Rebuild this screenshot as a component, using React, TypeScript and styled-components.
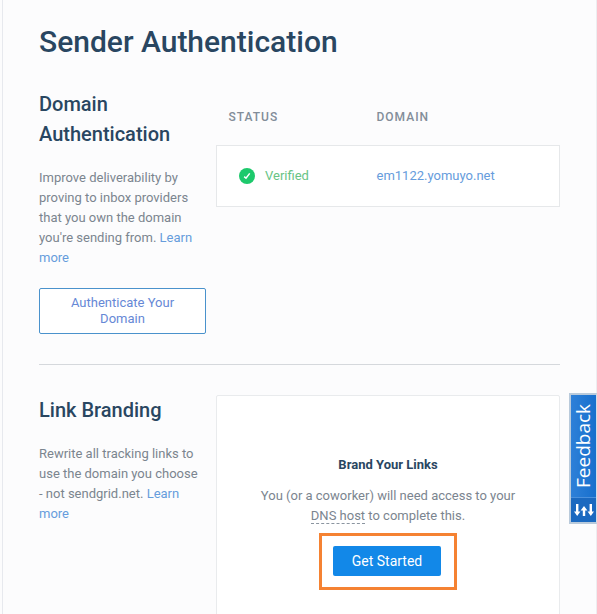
import React from "react";
import styled, { createGlobalStyle } from "styled-components";

const GlobalStyle = createGlobalStyle`
  *, *::before, *::after { box-sizing: border-box; }
  html { scrollbar-width: none; }
  body {
    margin: 0;
    background: #fcfcfd;
    color: #7b858f;
    font-family: Roboto, "Liberation Sans", sans-serif;
    font-size: 13px;
    line-height: 20px;
  }
  h1, h2, h3, p { margin: 0; }
`;

const Page = styled.main`
  min-height: 100vh;
  margin-left: 2px;
  padding: 22px 36px 32px;
  border-left: 1px solid #e7e9ee;
  border-right: 1px solid #ededf0;
`;

const Title = styled.h1`
  margin-bottom: 27px;
  color: #294661;
  font-size: 30px;
  font-weight: 500;
  line-height: 40px;
`;

const Section = styled.section`
  display: grid;
  grid-template-columns: 167px minmax(0, 1fr);
  column-gap: 10px;

  & + & {
    margin-top: 30px;
    padding-top: 30px;
    border-top: 1px solid #d5d8dc;
  }
`;

const SectionTitle = styled.h2`
  color: #294661;
  font-size: 20px;
  font-weight: 500;
  line-height: 30px;
`;

const Copy = styled.p`
  margin-top: 19px;
  padding-right: 4px;
`;

const Link = styled.a`
  color: #669cdc;
  text-decoration: none;
`;

const OutlineButton = styled.button`
  width: 100%;
  margin-top: 20px;
  padding: 6px 20px;
  border: 1px solid #4a92cc;
  border-radius: 2px;
  background: #fff;
  color: #6688d6;
  font: inherit;
  line-height: 16px;
`;

const DomainTable = styled.table`
  width: 100%;
  border-collapse: collapse;
  text-align: left;
`;

const HeadCell = styled.th`
  height: 56px;
  padding: 0 12px;
  color: #828d99;
  font-size: 12px;
  font-weight: 500;
  letter-spacing: 1px;
  text-transform: uppercase;

  &:first-child { width: 148px; }
`;

const BodyRow = styled.tr`
  height: 61px;
  border: 1px solid #e6e8ea;
  background: #fff;
`;

const BodyCell = styled.td`
  padding: 0 12px;

  &:first-child { padding-left: 22px; }
`;

const Status = styled.span`
  display: flex;
  align-items: center;
  gap: 10px;
  color: #68c485;
`;

const Card = styled.div`
  display: flex;
  flex-direction: column;
  align-items: center;
  padding: 59px 40px 48px;
  border: 1px solid #e9ebed;
  border-radius: 2px;
  background: #fff;
  text-align: center;
`;

const CardTitle = styled.h3`
  margin-bottom: 11px;
  color: #294661;
  font-size: 13px;
  font-weight: 700;
  line-height: 20px;
`;

const Term = styled.abbr`
  border-bottom: 1px dashed #8b95a0;
  text-decoration: none;
`;

const Highlight = styled.div`
  margin-top: 7px;
  padding: 10px 13px 11px 11px;
  border: 3px solid #f58232;
`;

const PrimaryButton = styled.button`
  display: block;
  height: 30px;
  padding: 0 19px;
  border: 0;
  border-radius: 2px;
  background: #1288e8;
  color: #fff;
  font: inherit;
  font-size: 14px;
`;

const FeedbackTab = styled.button`
  position: fixed;
  top: 393px;
  right: 0;
  display: flex;
  flex-direction: column;
  align-items: center;
  width: 28px;
  padding: 0;
  border: 2px solid #b9cadb;
  border-right: 1px solid #d5dde6;
  background: linear-gradient(90deg, #2e80d8, #176fcd);
  color: #fff;
  font-family: "Open Sans", sans-serif;
  font-size: 19px;
  line-height: 25px;
`;

const FeedbackLabel = styled.span`
  height: 102px;
  writing-mode: vertical-rl;
  transform: rotate(180deg);
  text-align: center;
`;

const FeedbackIcon = styled.span`
  display: flex;
  justify-content: center;
  width: 100%;
  padding: 6px 0;
  border-top: 1px solid #4b90dc;
  background: #1b69c0;
`;

const CheckIcon = () => (
  <svg width="16" height="16" viewBox="0 0 16 16" aria-hidden="true">
    <circle cx="8" cy="8" r="8" fill="#1dc96c" />
    <path d="M5.2 8.6 7 10.2 10.7 5.4" fill="none" stroke="#fff" strokeWidth="1.5" />
  </svg>
);

const ArrowsIcon = () => (
  <svg width="20" height="12" viewBox="0 0 20 12" aria-hidden="true" fill="#fff">
    <path d="M2 0h2.4v7.4h2L3.2 12 0 7.4h2z" />
    <path d="M8.8 12h2.4V6.6h2.2L10 2 6.6 6.6h2.2z" />
    <path d="M15.6 0H18v7.4h2L16.8 12l-3.2-4.6h2z" />
  </svg>
);

const domains = [{ status: "Verified", name: "em1122.yomuyo.net" }];

export default function App() {
  return (
    <>
      <GlobalStyle />
      <Page>
        <Title>Sender Authentication</Title>
        <Section>
          <div>
            <SectionTitle>Domain Authentication</SectionTitle>
            <Copy>
              Improve deliverability by proving to inbox providers that you own the domain
              you're sending from. <Link href="#domain-help">Learn more</Link>
            </Copy>
            <OutlineButton type="button">Authenticate Your Domain</OutlineButton>
          </div>
          <div>
            <DomainTable>
              <thead>
                <tr>
                  <HeadCell scope="col">Status</HeadCell>
                  <HeadCell scope="col">Domain</HeadCell>
                </tr>
              </thead>
              <tbody>
                {domains.map((domain) => (
                  <BodyRow key={domain.name}>
                    <BodyCell>
                      <Status>
                        <CheckIcon />
                        {domain.status}
                      </Status>
                    </BodyCell>
                    <BodyCell>
                      <Link href="#domain">{domain.name}</Link>
                    </BodyCell>
                  </BodyRow>
                ))}
              </tbody>
            </DomainTable>
          </div>
        </Section>
        <Section>
          <div>
            <SectionTitle>Link Branding</SectionTitle>
            <Copy>
              Rewrite all tracking links to use the domain you choose - not sendgrid.net.{" "}
              <Link href="#link-help">Learn more</Link>
            </Copy>
          </div>
          <Card>
            <CardTitle>Brand Your Links</CardTitle>
            <p>
              You (or a coworker) will need access to your <Term>DNS host</Term> to complete this.
            </p>
            <Highlight>
              <PrimaryButton type="button">Get Started</PrimaryButton>
            </Highlight>
          </Card>
        </Section>
      </Page>
      <FeedbackTab type="button">
        <FeedbackLabel>Feedback</FeedbackLabel>
        <FeedbackIcon>
          <ArrowsIcon />
        </FeedbackIcon>
      </FeedbackTab>
    </>
  );
}
